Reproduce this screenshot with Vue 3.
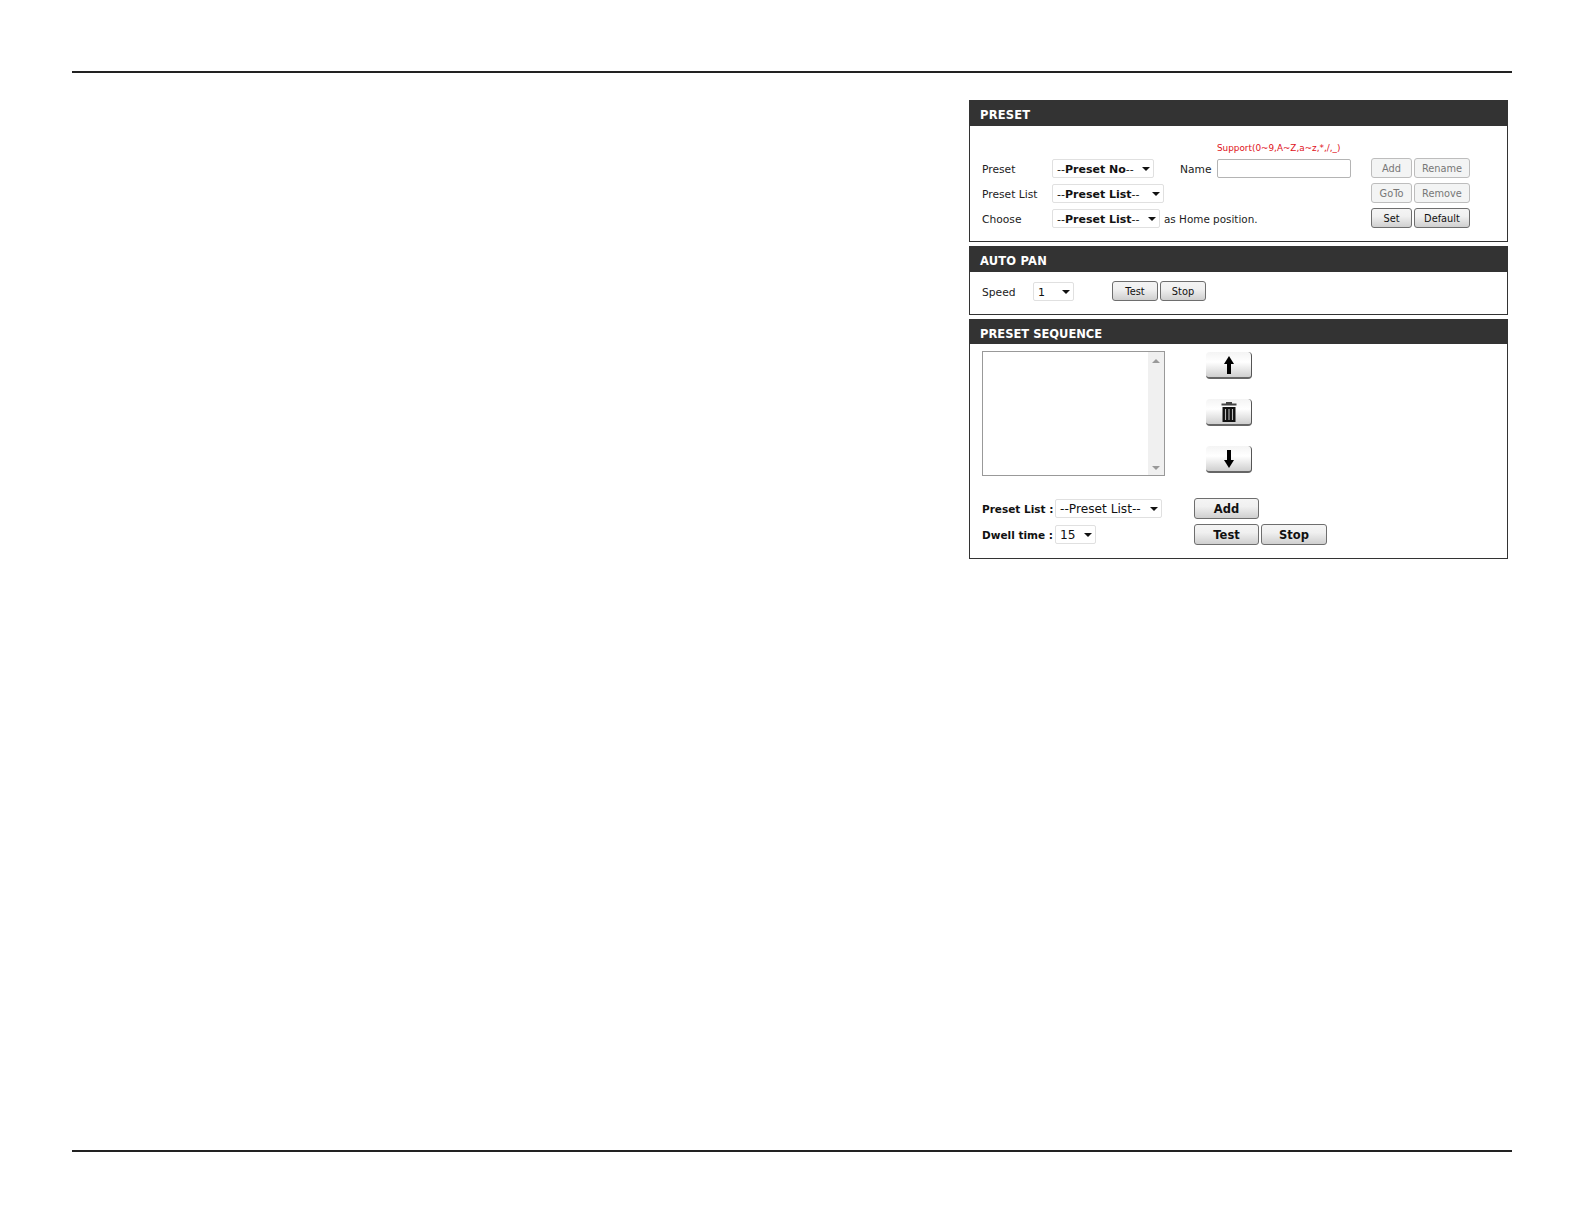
<script setup>
const presetRows = [
  { label: 'Preset', select: '--Preset No--', width: 102, name: true, buttons: [{ t: 'Add', off: true }, { t: 'Rename', off: true }] },
  { label: 'Preset List', select: '--Preset List--', width: 112, buttons: [{ t: 'GoTo', off: true }, { t: 'Remove', off: true }] },
  { label: 'Choose', select: '--Preset List--', width: 108, note: 'as Home position.', buttons: [{ t: 'Set' }, { t: 'Default' }] }
]
</script>

<template>
  <div class="page">
    <div class="rule"></div>
    <main class="main">
      <div class="panels">
        <section class="panel">
          <h2 class="head">PRESET</h2>
          <div class="body preset-body">
            <div class="hint">Support(0~9,A~Z,a~z,*,/,_)</div>
            <div class="preset-rows">
              <div v-for="r in presetRows" :key="r.label + r.select" class="row">
                <span class="label">{{ r.label }}</span>
                <div class="select bold" :style="{ width: r.width + 'px' }"><span>--<b>{{ r.select.slice(2, -2) }}</b>--</span><i class="caret"></i></div>
                <template v-if="r.name">
                  <span class="name-label">Name</span>
                  <div class="input"></div>
                </template>
                <span v-if="r.note" class="note">{{ r.note }}</span>
                <div class="btns">
                  <button v-for="(b, i) in r.buttons" :key="b.t" class="btn" :class="[{ off: b.off }, i === 0 ? 'w41' : 'w56']">{{ b.t }}</button>
                </div>
              </div>
            </div>
          </div>
        </section>

        <section class="panel">
          <h2 class="head">AUTO PAN</h2>
          <div class="body auto-body">
            <div class="row">
              <span class="label w51">Speed</span>
              <div class="select w41"><span>1</span><i class="caret"></i></div>
              <div class="auto-btns">
                <button class="btn w46">Test</button>
                <button class="btn w46">Stop</button>
              </div>
            </div>
          </div>
        </section>

        <section class="panel">
          <h2 class="head seq-head">PRESET SEQUENCE</h2>
          <div class="body seq-body">
            <div class="seq-top">
              <div class="listbox">
                <div class="list-area"></div>
                <div class="scroll">
                  <i class="tri up"></i>
                  <i class="tri down"></i>
                </div>
              </div>
              <div class="icon-btns">
                <button class="icon-btn" aria-label="Up">
                  <svg width="10" height="18" viewBox="0 0 10 18"><path d="M5 0 L10 8 H7 V18 H3 V8 H0 Z" fill="#000"/></svg>
                </button>
                <button class="icon-btn" aria-label="Delete">
                  <svg width="16" height="20" viewBox="0 0 16 20">
                    <path d="M5 0 H11 V1.5 H15.5 V3.5 H0.5 V1.5 H5 Z" fill="#444"/>
                    <path d="M1.5 5 H14.5 V20 H1.5 Z" fill="#111"/>
                    <path d="M4.5 7 V18 M8 7 V18 M11.5 7 V18" stroke="#bbb" stroke-width="1.1"/>
                  </svg>
                </button>
                <button class="icon-btn" aria-label="Down">
                  <svg width="10" height="18" viewBox="0 0 10 18"><path d="M5 18 L10 10 H7 V0 H3 V10 H0 Z" fill="#000"/></svg>
                </button>
              </div>
            </div>
            <div class="seq-form">
              <b class="seq-label">Preset List :</b>
              <div class="select w107 wide-text"><span>--Preset List--</span><i class="caret"></i></div>
              <div class="seq-btns"><button class="btn big">Add</button></div>
              <b class="seq-label">Dwell time :</b>
              <div class="select w41 wide-text"><span>15</span><i class="caret"></i></div>
              <div class="seq-btns"><button class="btn big">Test</button><button class="btn big">Stop</button></div>
            </div>
          </div>
        </section>
      </div>
    </main>
    <div class="rule"></div>
  </div>
</template>

<style>
html, body { background: #fff; }
</style>

<style scoped>
.page {
  width: 1440px;
  margin-left: 72px;
  padding-top: 71px;
  font-family: "DejaVu Sans", Verdana, sans-serif;
  font-size: 10.7px;
  color: #222;
}
.rule { height: 2px; background: #222; }
.main { height: 1077px; padding-top: 27px; box-sizing: border-box; }
.panels { width: 539px; margin-left: 897px; display: flex; flex-direction: column; gap: 4px; }
.panel { border: 1px solid #333; border-top: 0; background: #fff; }
.head {
  height: 26px;
  margin: 0 -1px;
  padding-left: 11px;
  background: #333;
  color: #fff;
  font-size: 11.5px;
  font-weight: 700;
  line-height: 30px;
  letter-spacing: 0.2px;
}
.seq-head { height: 25px; letter-spacing: 0; }
.body { padding-left: 12px; }
.preset-body { padding-top: 15px; padding-bottom: 13px; }
.hint { margin-left: 235px; height: 17px; line-height: 14px; color: #e01020; font-size: 8.85px; }
.preset-rows { display: flex; flex-direction: column; gap: 5px; }
.row { display: flex; align-items: center; height: 20px; }
.label { width: 70px; flex: none; padding-top: 2px; }
.label.w51 { width: 51px; }
.name-label { margin-left: 26px; width: 37px; flex: none; padding-top: 2px; }
.note { margin-left: 4px; font-size: 10.4px; padding-top: 1px; }
.select {
  box-sizing: border-box;
  height: 19px;
  border: 1px solid #e0e0e0;
  border-radius: 2px;
  background: #fff;
  display: flex;
  align-items: center;
  justify-content: space-between;
  padding: 2px 3px 0 4px;
  flex: none;
  font-size: 11px;
  color: #111;
}
.select b { font-weight: 700; }
.wide-text { font-size: 12.2px; padding-top: 1px; }
.w41 { width: 41px; }
.w107 { width: 107px; }
.caret { width: 0; height: 0; border: 4px solid transparent; border-top: 4px solid #111; border-bottom: 0; flex: none; }
.input { box-sizing: border-box; width: 134px; height: 19px; border: 1px solid #b4b4b4; border-radius: 2px; background: #fff; flex: none; }
.btns { margin-left: auto; margin-right: 37px; display: flex; gap: 2px; }
.btn {
  box-sizing: border-box;
  height: 20px;
  padding: 0;
  border: 1px solid #6e6e6e;
  border-radius: 3px;
  background: linear-gradient(#f4f4f4, #f0f0f0 40%, #cfcfcf);
  color: #111;
  font-family: inherit;
  font-size: 9.8px;
  flex: none;
}
.btn.off { border-color: #bdbdbd; background: #f3f4f4; color: #777; }
.btn.w41 { width: 41px; }
.w56 { width: 56px; }
.w46 { width: 46px; }
.auto-body { padding-top: 9px; padding-bottom: 13px; }
.auto-btns { margin-left: 38px; display: flex; gap: 2px; }
.seq-body { padding-top: 7px; padding-bottom: 13px; }
.seq-top { display: flex; height: 125px; }
.listbox { box-sizing: border-box; width: 183px; height: 125px; border: 1px solid #999; display: flex; }
.list-area { flex: 1; }
.scroll { width: 16px; background: #f0f0f0; display: flex; flex-direction: column; justify-content: space-between; align-items: center; padding: 7px 0 5px; box-sizing: border-box; }
.tri { width: 0; height: 0; border: 4px solid transparent; }
.tri.up { border-top: 0; border-bottom: 4px solid #999; }
.tri.down { border-bottom: 0; border-top: 4px solid #999; }
.icon-btns { margin-left: 41px; padding-top: 1px; display: flex; flex-direction: column; gap: 20px; }
.icon-btn {
  box-sizing: border-box;
  width: 46px;
  height: 27px;
  padding: 0;
  border: 0;
  border-right: 1px solid #555;
  border-bottom: 2px solid #666;
  border-radius: 4px;
  background: linear-gradient(#f4f4f4, #fff 40%, #cfcfcf);
  display: flex;
  align-items: center;
  justify-content: center;
}
.seq-form { margin-top: 22px; display: grid; grid-template-columns: 73px 139px auto; grid-auto-rows: 21px; row-gap: 5px; align-items: center; }
.seq-label { font-size: 10.5px; font-weight: 700; color: #111; white-space: nowrap; padding-top: 1px; }
.seq-btns { display: flex; gap: 2px; }
.btn.big { width: 65px; height: 21px; font-size: 11.5px; font-weight: 700; }
.btn.big + .btn.big { width: 66px; }
</style>
